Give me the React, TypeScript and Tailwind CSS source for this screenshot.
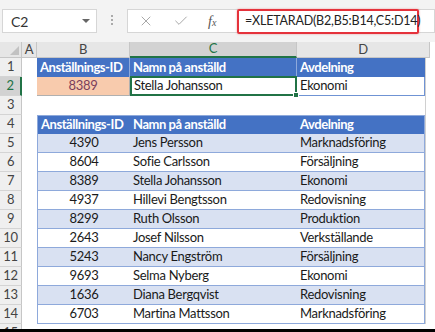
import { X, Check } from "lucide-react";

const font = { fontFamily: "Lato, 'Liberation Sans', sans-serif" };

const rows = [
  { id: "4390", name: "Jens Persson", dept: "Marknadsföring" },
  { id: "8604", name: "Sofie Carlsson", dept: "Försäljning" },
  { id: "8389", name: "Stella Johansson", dept: "Ekonomi" },
  { id: "4937", name: "Hillevi Bengtsson", dept: "Redovisning" },
  { id: "8299", name: "Ruth Olsson", dept: "Produktion" },
  { id: "2643", name: "Josef Nilsson", dept: "Verkställande" },
  { id: "5243", name: "Nancy Engström", dept: "Försäljning" },
  { id: "9693", name: "Selma Nyberg", dept: "Ekonomi" },
  { id: "1636", name: "Diana Bergqvist", dept: "Redovisning" },
  { id: "6703", name: "Martina Mattsson", dept: "Marknadsföring" },
];

function RowHead({ n, active }: { n: number; active?: boolean }) {
  return (
    <div
      className={`flex items-center justify-center text-[13px] border-b border-[#d4d4d4] ${
        active
          ? "bg-[#d2d2d2] text-[#217346] border-r-2 border-r-[#217346]"
          : "bg-[#efefef] text-[#444] border-r border-r-[#c6c6c6]"
      }`}
    >
      {n}
    </div>
  );
}

function Blank() {
  return <div className="bg-white" />;
}

function Gap() {
  return <div className="border-l border-[#d0d0d0]" />;
}

const head = "bg-[#4472c4] text-white font-bold flex items-center pl-[3px] whitespace-nowrap overflow-hidden tracking-[-0.45px]";

export default function App() {
  return (
    <div className="w-[435px] h-[332px] overflow-hidden bg-white border-b-[3px] border-black flex flex-col" style={font}>
      {/* formula bar */}
      <div className="h-[42px] shrink-0 bg-[#f3f3f3] flex items-start pt-[9px] pl-[2px] gap-[14px]">
        <div className="w-[95px] h-[24px] bg-white border border-[#d6d6d6] flex items-center justify-between pl-[8px] pr-[6px]">
          <span className="text-[14px] text-[#333]">C2</span>
          <span className="w-0 h-0 border-l-[4px] border-r-[4px] border-t-[4px] border-l-transparent border-r-transparent border-t-[#666]" />
        </div>
        <div className="flex flex-col gap-[2px] pt-[6px]">
          <span className="w-[2px] h-[2px] bg-[#aaa]" />
          <span className="w-[2px] h-[2px] bg-[#aaa]" />
          <span className="w-[2px] h-[2px] bg-[#aaa]" />
        </div>
        <div className="flex-1 h-[24px] bg-white border border-[#d6d6d6] flex items-center">
          <div className="flex items-center gap-[19px] pl-[10px] w-[109px]">
            <X size={16} strokeWidth={1.3} className="text-[#9a9a9a]" />
            <Check size={16} strokeWidth={1.3} className="text-[#9a9a9a]" />
            <span className="text-[14px] italic text-[#555]" style={{ fontFamily: "'Liberation Serif', serif" }}>
              f<span className="text-[10px]">x</span>
            </span>
          </div>
          <div className="h-[25px] w-[182px] border-2 border-[#e5323b] rounded-[2px] flex items-center pl-[6px] shadow-[0_0_2px_rgba(229,50,59,0.5)] text-[12.5px] tracking-[-0.2px] whitespace-nowrap text-[#222]">
            =XLETARAD(B2,B5:B14,C5:D14)
          </div>
        </div>
      </div>

      {/* grid */}
      <div className="grid grid-cols-[22px_15px_93px_167px_128px_5px_1fr] grid-rows-[16px_repeat(15,19px)] text-[13px] tracking-[-0.3px] text-[#1a1a1a]">
        {/* column headers */}
        <div className="bg-[#e6e6e6] border-r border-b border-[#c6c6c6] relative">
          <span className="absolute right-[2px] bottom-[2px] w-0 h-0 border-b-[9px] border-l-[9px] border-l-transparent border-b-[#c2c2c2]" />
        </div>
        <div className="bg-[#e6e6e6] border-r border-b border-[#c6c6c6] flex items-center justify-center text-[#444]">A</div>
        <div className="bg-[#e6e6e6] border-r border-b border-[#c6c6c6] flex items-center justify-center text-[#444]">B</div>
        <div className="bg-[#d2d2d2] border-r border-[#c6c6c6] border-b-2 border-b-[#217346] flex items-center justify-center text-[#217346]">C</div>
        <div className="col-span-2 bg-[#e6e6e6] border-r border-b border-[#c6c6c6] flex items-center justify-center text-[#444]">D</div>
        <div className="bg-white" />

        {/* row 1 */}
        <RowHead n={1} />
        <Blank />
        <div className={`${head} border-r border-[#8ea9db]`}>Anställnings-ID</div>
        <div className={`${head} border-r border-[#8ea9db]`}>Namn på anställd</div>
        <div className={head}>Avdelning</div>
        <Gap />
        <Blank />

        {/* row 2 */}
        <RowHead n={2} active />
        <Blank />
        <div className="bg-[#f8cbad] text-[#7b3f5c] flex items-center justify-center border-b border-r border-[#b0b0b0]">8389</div>
        <div className="relative bg-white border-2 border-[#217346] flex items-center pl-[2px] -mt-px">
          Stella Johansson
          <span className="absolute -right-[4px] -bottom-[4px] w-[6px] h-[6px] bg-[#217346] border border-white" />
        </div>
        <div className="bg-white border-b border-r border-[#6f93d4] flex items-center pl-[3px]">Ekonomi</div>
        <Gap />
        <Blank />

        {/* row 3 */}
        <RowHead n={3} />
        <Blank />
        <Blank />
        <Blank />
        <Blank />
        <Gap />
        <Blank />

        {/* row 4 header */}
        <RowHead n={4} />
        <Blank />
        <div className={`${head} border-l border-t border-[#8ea9db]`}>Anställnings-ID</div>
        <div className={`${head} border-t border-[#8ea9db]`}>Namn på anställd</div>
        <div className={`${head} border-r border-t border-[#8ea9db]`}>Avdelning</div>
        <Gap />
        <Blank />

        {rows.map((r, i) => {
          const band = i % 2 === 0 ? "bg-[#d9e1f2]" : "bg-white";
          return [
            <RowHead key={`h${i}`} n={i + 5} />,
            <Blank key={`a${i}`} />,
            <div key={`b${i}`} className={`${band} flex items-center justify-center border-l border-b border-[#8ea9db]`}>{r.id}</div>,
            <div key={`c${i}`} className={`${band} flex items-center pl-[3px] border-b border-[#8ea9db]`}>{r.name}</div>,
            <div key={`d${i}`} className={`${band} flex items-center pl-[3px] border-r border-b border-[#8ea9db]`}>{r.dept}</div>,
            <Gap key={`e${i}`} />,
            <Blank key={`f${i}`} />,
          ];
        })}

        {/* row 15 */}
        <RowHead n={15} />
      </div>
    </div>
  );
}
